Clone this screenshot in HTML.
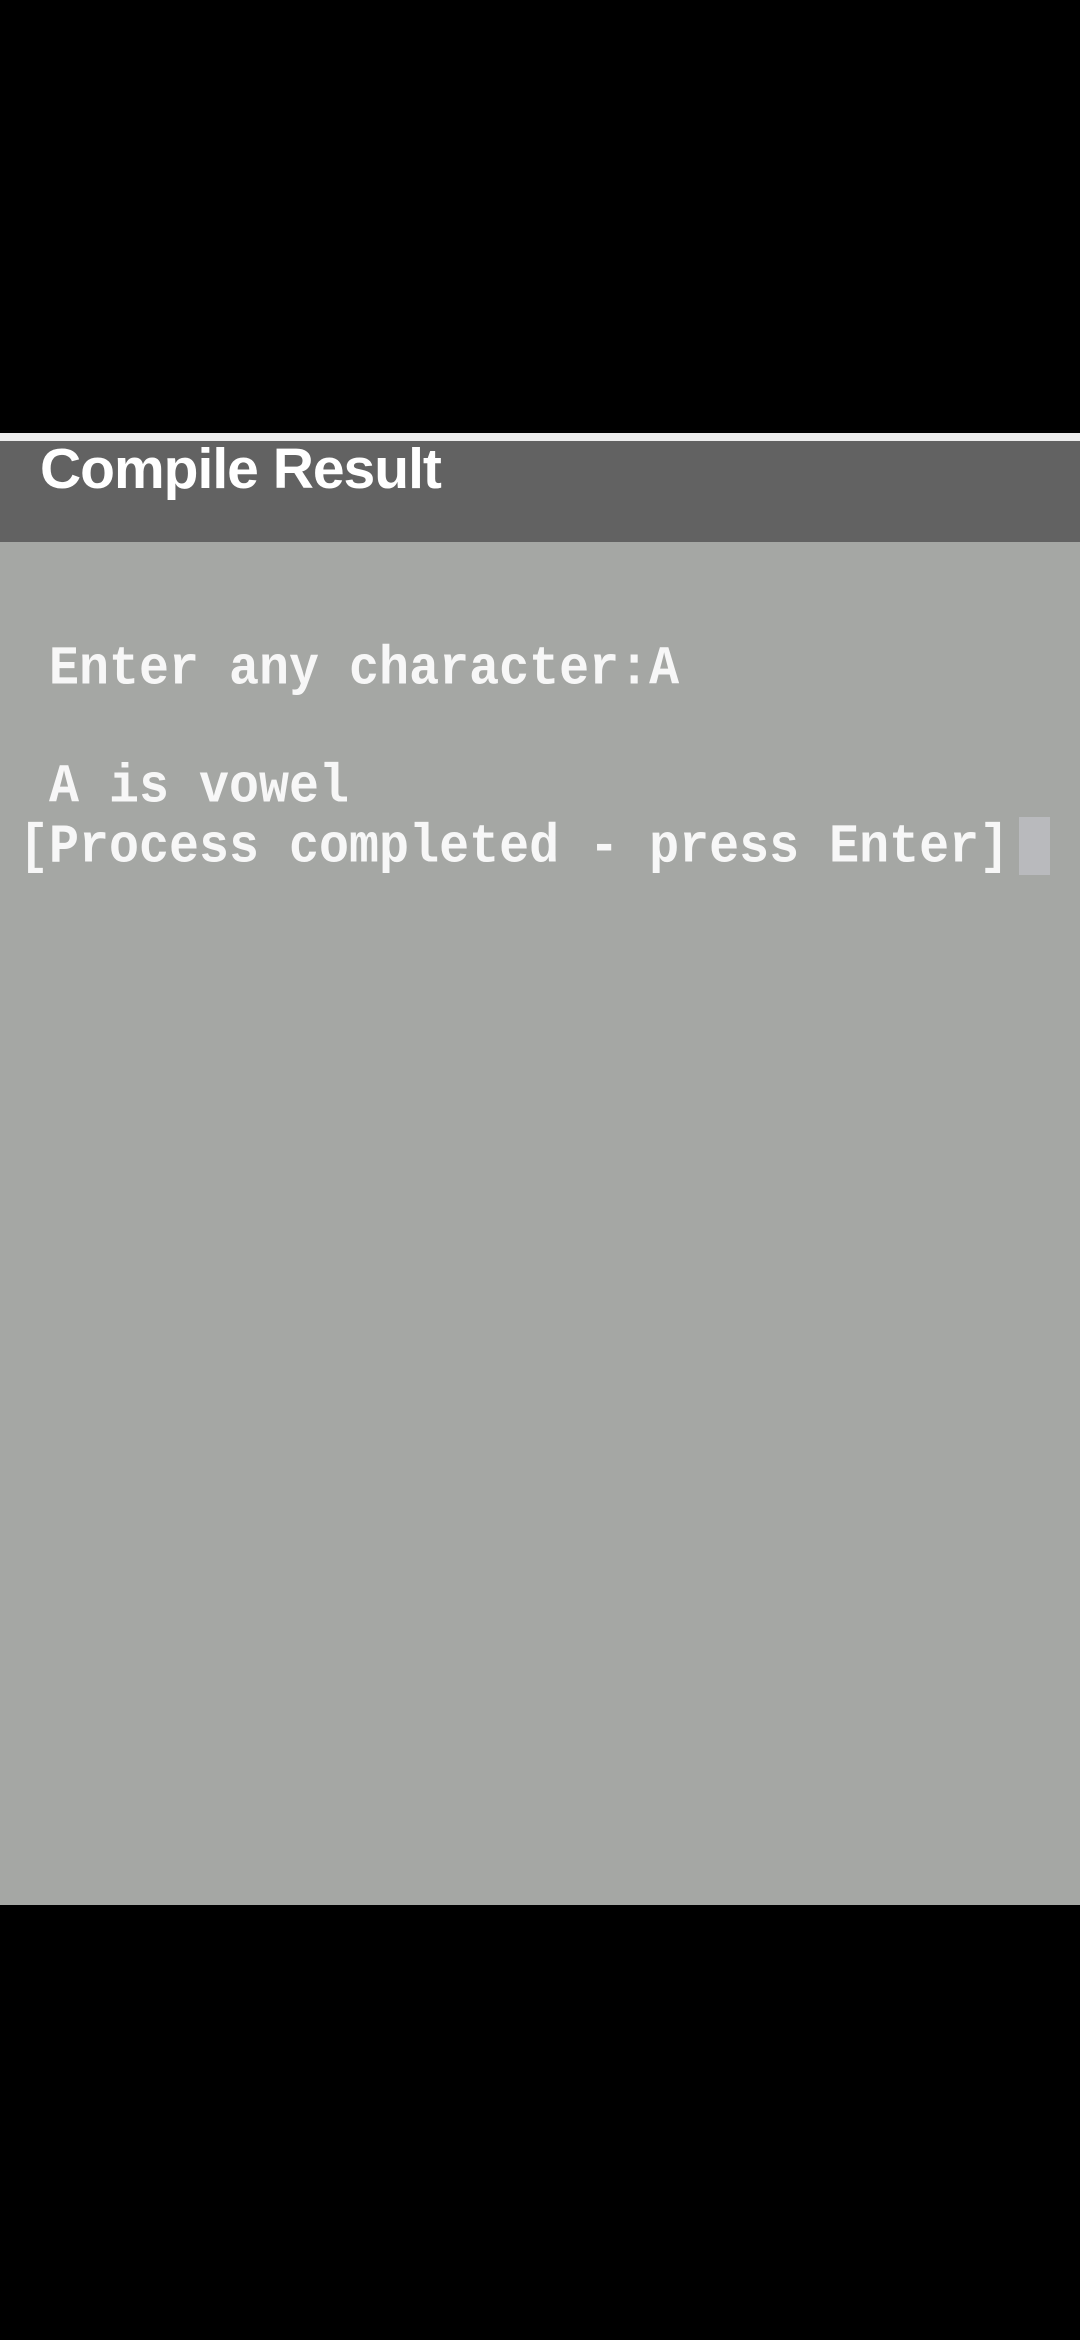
<!DOCTYPE html>
<html><head><meta charset="utf-8"><style>
html,body{margin:0;padding:0;}
body{width:1080px;height:2340px;background:#000;position:relative;overflow:hidden;}
.wl{position:absolute;left:0;top:433px;width:1080px;height:8px;background:#ececec;}
.hd{position:absolute;left:0;top:441px;width:1080px;height:101px;background:#626262;}
.ht{position:absolute;left:40px;top:441px;font:bold 57px/1 "Liberation Sans",sans-serif;color:#fff;letter-spacing:-1px;white-space:nowrap;}
.bd{position:absolute;left:0;top:542px;width:1080px;height:1363px;background:#a5a7a4;}
.t{position:absolute;left:19px;font:bold 50px/1 "Liberation Mono",monospace;color:#f7f7f7;white-space:pre;transform:scaleY(1.1);transform-origin:0 100%;}
.cur{position:absolute;left:1019px;top:817px;width:31px;height:58px;background:#b9babd;}
</style></head><body>
<div class="wl"></div>
<div class="hd"></div>
<div class="ht">Compile Result</div>
<div class="bd"></div>
<div class="t" style="top:648px"> Enter any character:A</div>
<div class="t" style="top:766px"> A is vowel</div>
<div class="t" style="top:826px">[Process completed - press Enter]</div>
<div class="cur"></div>
</body></html>
